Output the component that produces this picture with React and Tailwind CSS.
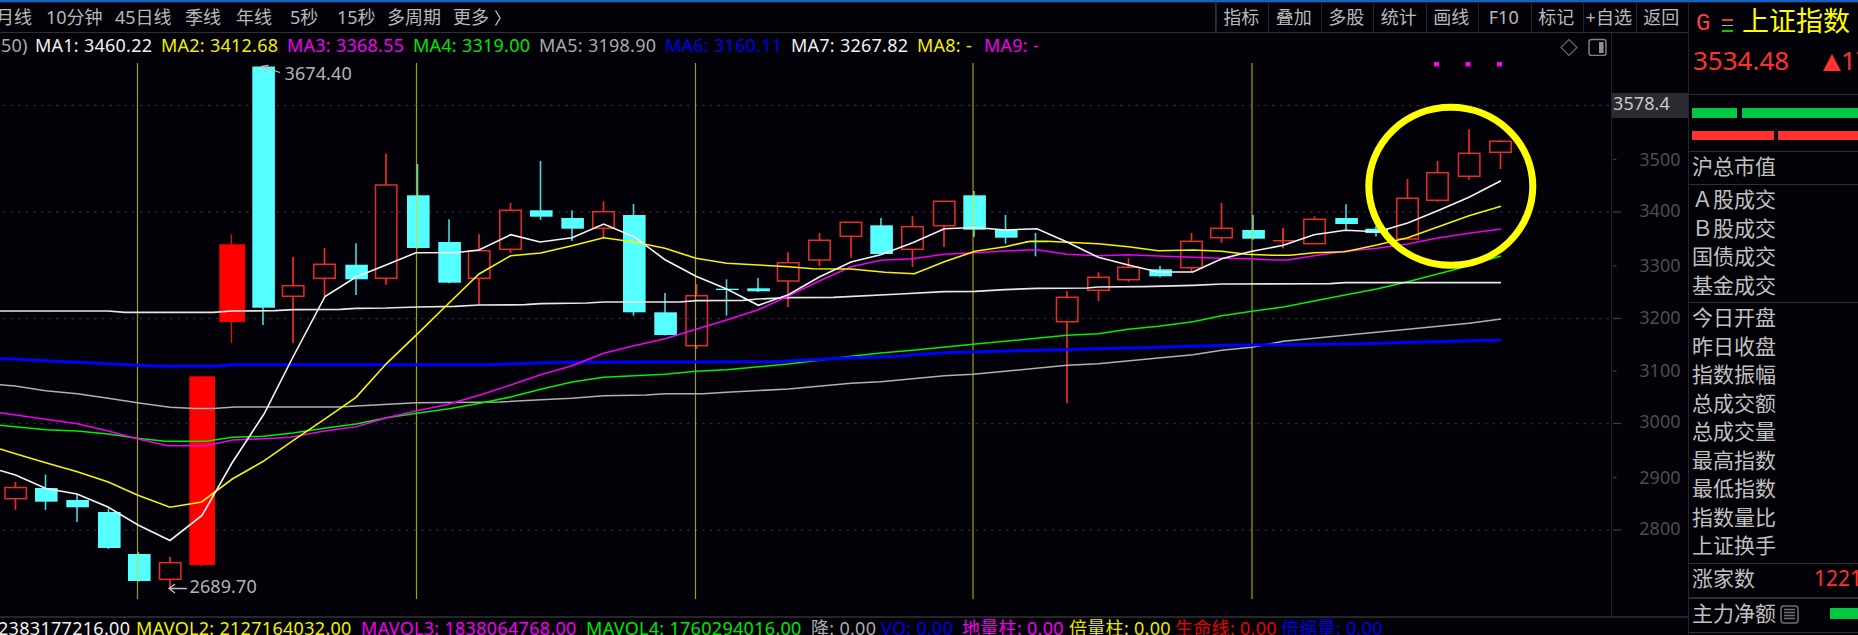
const PERIODS = [
  { label: '月线', width: 'w-[50px]' },
  { label: '10分钟', width: 'w-[69px]' },
  { label: '45日线', width: 'w-[70px]' },
  { label: '季线', width: 'w-[51px]' },
  { label: '年线', width: 'w-[54px]' },
  { label: '5秒', width: 'w-[47px]' },
  { label: '15秒', width: 'w-[50px]' },
  { label: '多周期', width: 'w-[66px]' },
  { label: '更多', width: 'w-[41px]' },
]

const TOOLS = ['指标', '叠加', '多股', '统计', '画线', 'F10', '标记', '+自选', '返回']

const MA_LEGEND = [
  { label: 'MA1: 3460.22', color: 'text-[#f0f0f0]', width: 'w-[126px]' },
  { label: 'MA2: 3412.68', color: 'text-[#f0f000]', width: 'w-[126px]' },
  { label: 'MA3: 3368.55', color: 'text-[#f000f0]', width: 'w-[126px]' },
  { label: 'MA4: 3319.00', color: 'text-[#00e600]', width: 'w-[126px]' },
  { label: 'MA5: 3198.90', color: 'text-[#aaaaaa]', width: 'w-[126px]' },
  { label: 'MA6: 3160.11', color: 'text-[#0000e8]', width: 'w-[126px]' },
  { label: 'MA7: 3267.82', color: 'text-[#f0f0f0]', width: 'w-[126px]' },
  { label: 'MA8: -', color: 'text-[#f0f000]', width: 'w-[67px]' },
  { label: 'MA9: -', color: 'text-[#f000f0]', width: 'w-[67px]' },
]

const VOL_LEGEND = [
  { label: '2383177216.00', color: 'text-[#f0f0f0]', width: 'w-[138px]' },
  { label: 'MAVOL2: 2127164032.00', color: 'text-[#f0f000]', width: 'w-[225px]' },
  { label: 'MAVOL3: 1838064768.00', color: 'text-[#f000f0]', width: 'w-[225px]' },
  { label: 'MAVOL4: 1760294016.00', color: 'text-[#00e600]', width: 'w-[225px]' },
  { label: '降: 0.00', color: 'text-[#aaaaaa]', width: 'w-[70px]' },
  { label: 'VO: 0.00', color: 'text-[#0000e8]', width: 'w-[81px]' },
  { label: '地量柱: 0.00', color: 'text-[#f000f0]', width: 'w-[107px]' },
  { label: '倍量柱: 0.00', color: 'text-[#e8e800]', width: 'w-[106px]' },
  { label: '生命线: 0.00', color: 'text-[#e80000]', width: 'w-[106px]' },
  { label: '倍缩量: 0.00', color: 'text-[#0000e8]', width: 'w-[107px]' },
]

// [type, centre x, body left, body top, body bottom, high, low]
// d = down (cyan), u = up (hollow red), f = limit-up (filled red)
const CANDLES = [
  ['u', 15.5, 5, 487.5, 498.7, 482, 509.7],
  ['d', 45.5, 35, 488, 501.7, 474.5, 510],
  ['d', 77, 66.3, 500, 507.3, 494, 522],
  ['d', 108.5, 98, 512, 548, 508.5, 549],
  ['d', 138.5, 128, 554, 581, 552.3, 581.7],
  ['u', 170, 159.5, 562.7, 579.3, 557, 588.3],
  ['f', 201.5, 189.3, 376.3, 565, 376.3, 566.7],
  ['f', 231.5, 219.3, 244.3, 322, 234.3, 343],
  ['d', 263, 252.3, 66.5, 307.7, 66.5, 325],
  ['u', 293, 282.5, 285.7, 296.3, 257, 343],
  ['u', 324.5, 313.8, 264.3, 278.3, 248, 296.7],
  ['d', 356, 345.3, 264.7, 279.3, 243.3, 295],
  ['u', 386, 375.5, 185, 278.3, 153.5, 284.7],
  ['d', 417.5, 407, 195.3, 248, 164, 248.5],
  ['d', 449, 438.3, 242, 282.7, 219.3, 283.3],
  ['u', 479, 468.5, 250.7, 278.3, 234.3, 305],
  ['u', 510.5, 499.8, 210.3, 249.3, 203, 253],
  ['d', 540.5, 530, 210.3, 216.7, 161, 220],
  ['d', 572, 561.3, 218, 228.7, 210.3, 241],
  ['u', 603.5, 592.8, 211.7, 228.3, 201.3, 238.3],
  ['d', 633.5, 623, 215, 312.3, 204, 315.7],
  ['d', 665, 654.3, 312.3, 335, 293, 335.5],
  ['u', 696.5, 686, 295.7, 345.7, 284, 349],
  ['d', 726.5, 716, 288.7, 290, 279.3, 315.7],
  ['d', 758, 747.3, 288.3, 291.3, 278, 292],
  ['u', 788, 777.5, 262.7, 281, 252.3, 307],
  ['u', 819.5, 808.8, 240.3, 260, 233, 266.3],
  ['u', 851, 840.2, 222.3, 236.3, 222.3, 257.7],
  ['d', 881, 870.3, 225.3, 254, 218, 254],
  ['u', 912.5, 901.8, 226.7, 249.3, 216.3, 266.7],
  ['u', 944, 933.5, 201.3, 225.7, 201.3, 247],
  ['d', 974, 963.3, 195.3, 229.7, 191, 237],
  ['d', 1005.5, 995, 229.7, 237.7, 215, 243.7],
  ['d', 1035.5, 1025.3, 241, 242.3, 233, 256.3],
  ['u', 1067, 1056.5, 297.3, 321.7, 291.3, 403.3],
  ['u', 1098.5, 1087.8, 277.3, 290.3, 272.3, 301],
  ['u', 1128.5, 1117.8, 267.3, 279.7, 258.3, 281.7],
  ['d', 1160, 1149.3, 269.3, 276.3, 266, 277.3],
  ['u', 1191.5, 1180.8, 241.3, 267.7, 233, 271.7],
  ['u', 1221.5, 1210.8, 228.3, 237.7, 203, 242.7],
  ['d', 1253, 1242.3, 230, 238.7, 215, 239.7],
  ['u', 1283, 1272.8, 240.7, 240.7, 228.3, 248.3],
  ['u', 1314.5, 1303.8, 219.3, 243.7, 216.3, 243.7],
  ['d', 1346, 1335.3, 218, 224, 204.3, 230.3],
  ['d', 1376, 1365.3, 228.7, 233, 226, 236.5],
  ['u', 1407.5, 1396.8, 198.3, 239, 179, 239],
  ['u', 1437.5, 1426.8, 172.7, 200.3, 161, 201.7],
  ['u', 1469, 1458.5, 153.3, 176.3, 129.3, 179.7],
  ['u', 1500.5, 1489.8, 141.3, 152.3, 140, 169],
]

const MA_LINES = [
  {
    name: 'MA5', color: '#b0b0b0', width: 1.6,
    points: '0,384.7 15,386 45.7,390.7 77.3,393.7 108.3,398.3 137.3,402.7 170,407.3 195,408.5 213,408.5 235,407 340,407 356,406 416.7,402.7 480,402.3 500,402 540.7,399.7 572,398.3 603.7,395.7 646,395 665,393.7 703,393.7 726.7,392.3 788.3,389 851,383.3 880.7,381.7 944.3,375.7 973,374.3 1067,365.3 1098.3,363.7 1158.3,358 1193,354.7 1221.7,350.3 1252,347.3 1283.3,341.3 1345,335.3 1407.7,329.3 1469,323.3 1501,319',
  },
  {
    name: 'MA4', color: '#00f000', width: 1.6,
    points: '0,425.3 45.7,429.7 77.3,431 108.3,434 137.3,438.3 165,441.3 206,441.3 232.3,437.3 263.3,436.3 293,433 324.3,428.3 356,424 386.7,417.7 416.7,413.3 449,408.7 480,403.3 510.7,397 540.7,389.3 572,382 603.7,377.3 634,375.7 665,374.3 696,371.3 726.7,369.7 788.3,364 819.3,360.3 851,356.3 880.7,353 912.7,350.3 973,344.3 1067,335.3 1098.3,333.7 1128.3,329.3 1158.3,326.3 1193,321.7 1221.7,315.7 1252,311.3 1283.3,307 1345,295 1376.7,289 1407.7,281.7 1453,270 1501,256',
  },
  {
    name: 'MA6', color: '#0000ff', width: 3,
    points: '0,358.7 15,359 45.7,360.7 77.3,362.3 137.3,365.3 165,366.3 213,366.3 235,364.8 493,364.8 510.7,363.7 567,362.3 773,361.7 851,357.7 900,356.3 912.7,354.7 944,352.7 1037,350.3 1158,347.3 1226.7,345.3 1280,344.7 1360,343.8 1423,342 1501,340',
  },
  {
    name: 'MA7', color: '#e8e8e8', width: 1.7,
    points: '0,311 108,311 125,312.3 213,312.3 232,311 275,310.7 293,309.7 340,309.3 356,308.3 386,308 417,307 455,306.3 479,305 525,304.7 540.7,303.7 587,303 603.7,302 680,302 696,300.7 743,300.3 758,299 788,297.7 833,297.3 900,294 944,291.7 975,291.3 1005,289.7 1037,288.3 1087,288 1098,287 1143,286.7 1193,285.3 1222,284 1330,283.7 1345,282.6 1501,282.6',
  },
  {
    name: 'MA3', color: '#f000f0', width: 1.6,
    points: '0,412.7 45.7,419.3 77.3,423.7 108.3,431 137.3,438.7 168,445.7 206,445.7 232.3,440 263.3,438.7 290,437.3 324.3,431 356,426.7 386.7,417.7 416.7,410.7 446.7,404.7 480,395 510.7,385 540.7,374.7 572,365.7 603.7,353.3 634,345.7 665,338.7 696,329.3 726.7,320 758.3,309.7 788.3,296 819.3,281 851,266.7 880.7,260.3 912.7,258.7 944.3,254.3 975,252.7 1005.3,251 1037,249.7 1067,254.3 1098.3,255.7 1128.3,254.7 1158.3,256 1193,257.3 1221.7,258.3 1252,258.7 1273,260 1288,260 1314,255.7 1345,251.3 1376.7,248.3 1407.7,244 1437.7,238 1469,233.3 1501,229',
  },
  {
    name: 'MA2', color: '#f5f500', width: 1.6,
    points: '0,449 15.5,453.7 45.7,462.7 77.3,471.7 108.3,482 137.3,495 170,507.3 201.7,502 232.3,479 263.3,461.3 293.3,440.3 324.3,419.3 356,397.3 386.7,363.3 416.7,334.7 446.7,305.3 479,274 510.7,255.7 540.7,253 572,245.7 603.7,237.7 634,242 665,248.3 696,258.3 726.7,263.3 758.3,265 788.3,266.7 813.3,268.7 851,269 885,272.3 914.3,273.7 944.3,261.7 975,251.3 1005.3,246.7 1030,241.3 1046.7,241.3 1067,242.3 1098.3,243.7 1128.3,246.7 1158.3,250.7 1193.3,250 1221.7,251.3 1246.7,254.3 1273,255.3 1290,255.3 1314,252.7 1345,251.7 1376.7,245 1407.7,237.7 1437.7,227 1469,215.7 1501,206.3',
  },
  {
    name: 'MA1', color: '#f5f5f5', width: 1.6,
    points: '0,470.5 15.5,475 46,488.5 77,494 108,507 138,525 170,540.5 202,515.5 232,463 264,414 293,357 325,296.5 356,277 386,265 416,252.7 457,252.5 479,250 510.7,234.7 540,242 572,237.7 603.7,224 634,236.7 665,259.7 696,276.3 726.7,289 758.3,305.3 788.3,294.7 819.3,277 851,262 880.7,254.7 912.7,242.7 944.3,228.7 975,227.5 1005.3,230 1037,228.7 1067,242 1098.3,257.3 1128.3,265 1158.3,272 1193,272 1221.7,258.7 1252,251.3 1283.3,245.3 1314,234.7 1345.3,230.3 1378,231.7 1407.7,223 1437.7,210.7 1469,197.3 1501,180.7',
  },
]

const GRID_Y = [105.5, 212, 318.5, 423.5, 530]
const YEAR_LINES = [137.5, 416.5, 695.5, 973, 1252]

const AXIS = [
  { label: '3500', text: 165.5, tick: 159.5, long: false },
  { label: '3400', text: 216.5, tick: 212, long: true },
  { label: '3300', text: 272, tick: 266, long: false },
  { label: '3200', text: 323.5, tick: 318.5, long: true },
  { label: '3100', text: 377, tick: 371, long: false },
  { label: '3000', text: 428, tick: 423.5, long: true },
  { label: '2900', text: 483.5, tick: 477.5, long: false },
  { label: '2800', text: 534.5, tick: 530, long: true },
]

const TURNOVER = ['Ａ股成交', 'Ｂ股成交', '国债成交', '基金成交']
const QUOTES = ['今日开盘', '昨日收盘', '指数振幅', '总成交额', '总成交量', '最高指数', '最低指数', '指数量比', '上证换手']

function Candle({ data }) {
  const [type, cx, left, top, bottom, high, low] = data
  if (type === 'd') {
    return (
      <g fill="#55ffff">
        <rect x={cx - 0.8} y={high} width="1.6" height={low - high} opacity="0.85" />
        <rect x={left} y={top} width="22.6" height={bottom - top} />
      </g>
    )
  }
  if (type === 'f') {
    return (
      <g fill="#ff0000">
        <rect x={cx - 0.6} y={high} width="1.2" height={low - high} />
        <rect x={left} y={top} width="25.7" height={bottom - top} />
      </g>
    )
  }
  return (
    <g stroke="#e82c2c" strokeWidth="1.5" fill="none">
      <path d={`M${cx} ${high}V${top}M${cx} ${bottom}V${low}`} strokeWidth="1.7" />
      {top === bottom ? (
        <path d={`M${left} ${top}h21.6M${cx} ${high}V${low}`} />
      ) : (
        <rect x={left} y={top} width="21.4" height={bottom - top} />
      )}
    </g>
  )
}

function Chart() {
  return (
    <svg width="1611" height="554" viewBox="0 62 1611 554" className="block" fontFamily="'Noto Sans', sans-serif" fontSize="18">
      {GRID_Y.map((y) => (
        <path key={y} d={`M3 ${y}H1611`} stroke="#2b2b2e" strokeWidth="1.4" strokeDasharray="2.4 5.2" />
      ))}

      {CANDLES.map((c) => (
        <Candle key={c[1]} data={c} />
      ))}

      {YEAR_LINES.map((x) => (
        <path key={x} d={`M${x} 63V599`} stroke="#e6d900" strokeOpacity="0.72" strokeWidth="1.2" />
      ))}

      {MA_LINES.map(({ name, color, width, points }) => (
        <polyline key={name} points={points} fill="none" stroke={color} strokeWidth={width} />
      ))}

      {/* high / low markers */}
      <path d="M280 72.5L261.5 66.5M268.5 65.3L261.5 66.5L266.5 72.5" fill="none" stroke="#c0c0c0" strokeWidth="1.3" />
      <text x="284.5" y="80" fill="#b4b4b4" letterSpacing="0.1">3674.40</text>
      <path d="M187 588.5H169M175 584L169 588.5L175 593" fill="none" stroke="#c0c0c0" strokeWidth="1.3" />
      <text x="189.5" y="593" fill="#b4b4b4" letterSpacing="0.1">2689.70</text>

      <rect x="1434" y="62" width="5" height="4.5" fill="#ff00ff" />
      <rect x="1465.5" y="62" width="5" height="4.5" fill="#ff00ff" />
      <rect x="1497" y="62" width="5" height="4.5" fill="#ff00ff" />

      <ellipse cx="1450.8" cy="186.3" rx="82" ry="79" fill="none" stroke="#ffff00" strokeWidth="7" />
    </svg>
  )
}

function PriceAxis() {
  return (
    <svg width="76" height="583" viewBox="1612 33 76 583" className="block" fontFamily="'Noto Sans', sans-serif" fontSize="18">
      <rect x="1612" y="93" width="76" height="25" fill="#2a2b30" />
      <text x="1613" y="110" fill="#c8c8c8" letterSpacing="0.1">3578.4</text>
      {AXIS.map(({ label, text, tick, long }) => (
        <g key={label}>
          <path d={`M1613 ${tick}h${long ? 8 : 3.5}`} stroke="#3c3c3e" strokeWidth="1.3" />
          <text x="1680.5" y={text} textAnchor="end" fill="#4e4e4e">{label}</text>
        </g>
      ))}
    </svg>
  )
}

function Toolbar() {
  return (
    <div className="flex justify-between h-[30px] shrink-0 border-b border-[#303030] text-[#b8b8b8]">
      <div className="flex items-center -ml-1 pb-px whitespace-nowrap">
        {PERIODS.map(({ label, width }) => (
          <span key={label} className={`${width} shrink-0`}>{label}</span>
        ))}
        <svg width="8" height="18" viewBox="0 0 8 18" className="mt-0.5" fill="none" stroke="#b8b8b8" strokeWidth="1.4">
          <path d="M1.5 1.5L6 9L1.5 16.5" />
        </svg>
      </div>
      <div className="flex border-l border-[#303030]">
        {TOOLS.map((label) => (
          <span key={label} className="flex w-[52.5px] items-center justify-center border-l border-[#262628] pr-0.5 pb-px whitespace-nowrap">
            {label}
          </span>
        ))}
      </div>
    </div>
  )
}

function SidePanel() {
  return (
    <aside className="flex w-[170px] shrink-0 flex-col overflow-hidden border-l border-[#262628] text-[21px] leading-[28.5px] text-[#c0c0c0] whitespace-nowrap">
      <div className="h-[92px] shrink-0 border-b border-[#303030] pl-1">
        <div className="flex h-[37px] items-center">
          <span className="w-[24px] shrink-0 pl-[3px] pt-1.5 font-['Liberation_Mono'] text-[24px] text-[#ff4040]">G</span>
          <div className="flex w-[25px] shrink-0 flex-col gap-1 pl-[5px] pt-2">
            <span className="h-[1.5px] w-[11px] bg-[#e04040]" />
            <span className="h-[1.5px] w-[11px] bg-[#b0b0b0]" />
            <span className="h-[1.5px] w-[11px] bg-[#00d000]" />
          </div>
          <span className="text-[27px] text-[#ffff00]">上证指数</span>
        </div>
        <div className="flex h-[41px] items-center text-[26px] text-[#ff3030]">
          <span className="w-[130px] shrink-0">3534.48</span>
          <svg width="18" height="17" viewBox="0 0 18 17" className="mt-1 shrink-0">
            <path d="M9 0L18 17H0Z" fill="#ff3030" />
          </svg>
          <span>17</span>
        </div>
      </div>

      <div className="flex h-[57px] shrink-0 flex-col gap-[13px] border-b border-[#303030] pl-[3px] pt-[13px]">
        <div className="flex h-[10px] gap-[5px]">
          <span className="w-[45px] bg-[#00c840]" />
          <span className="flex-1 bg-[#00c840]" />
        </div>
        <div className="flex h-[9px] gap-1">
          <span className="w-[82px] bg-[#ff3030]" />
          <span className="flex-1 bg-[#ff3030]" />
        </div>
      </div>

      <div className="h-[33px] shrink-0 border-b border-[#303030] pl-[3px]">沪总市值</div>

      <div className="h-[118px] shrink-0 border-b border-[#303030] pl-[3px]">
        {TURNOVER.map((label) => (
          <div key={label}>{label}</div>
        ))}
      </div>

      <div className="h-[261px] shrink-0 border-b border-[#303030] pl-[3px]">
        {QUOTES.map((label) => (
          <div key={label}>{label}</div>
        ))}
      </div>

      <div className="flex h-[35px] shrink-0 border-b-2 border-[#303030] pl-[3px]">
        <span className="w-[122px] shrink-0">涨家数</span>
        <span className="text-[#ff3030]">1221</span>
      </div>

      <div className="flex h-[34px] shrink-0 border-b border-[#303030] pl-[3px]">
        <span className="w-[88px] shrink-0">主力净额</span>
        <svg width="19" height="19" viewBox="0 0 19 19" className="mt-[6px] shrink-0" fill="none" stroke="#707070">
          <rect x="1" y="1" width="17" height="17" rx="3" strokeWidth="1.5" />
          <path d="M4 4.5H15M4 7.5H15M4 10.5H15M4 13.5H15" strokeWidth="1.3" />
        </svg>
        <span className="ml-[31px] mt-[9px] h-[11px] flex-1 bg-[#00c840]" />
      </div>
    </aside>
  )
}

export default function App() {
  return (
    <div className="flex h-[635px] w-[1858px] flex-col overflow-hidden bg-[#020208] font-['Noto_Sans','Noto_Sans_CJK_SC',sans-serif] text-[18px]">
      <div className="h-[3px] shrink-0 border-b border-[#1a2028] bg-[#1262cc]" />
      <div className="flex min-h-0 flex-1">
        <main className="flex w-[1688px] shrink-0 flex-col">
          <Toolbar />
          <div className="flex h-[583px] shrink-0">
            <section className="w-[1612px] border-r border-[#242426]">
              <div className="flex h-[29px] justify-between overflow-hidden leading-[24px] whitespace-nowrap">
                <div className="flex tracking-[0.25px]">
                  <span className="w-[35px] pl-px text-[#aaaaaa]">50)</span>
                  {MA_LEGEND.map(({ label, color, width }) => (
                    <span key={label} className={`${width} ${color} shrink-0`}>{label}</span>
                  ))}
                </div>
                <div className="flex gap-2.5 pr-1 pt-[5px]">
                  <svg width="18" height="18" viewBox="0 0 18 18" fill="none" stroke="#606060" strokeWidth="1.3">
                    <path d="M9 1.5L17 9.5L9 17.5L1 9.5Z" />
                  </svg>
                  <svg width="19" height="18" viewBox="0 0 19 18">
                    <rect x="1" y="1.5" width="17" height="16" rx="2.5" fill="none" stroke="#808080" strokeWidth="1.5" />
                    <rect x="11" y="4" width="4.5" height="11" fill="#909090" />
                  </svg>
                </div>
              </div>
              <Chart />
            </section>
            <PriceAxis />
          </div>
          <div className="flex h-[19px] shrink-0 overflow-hidden border-t-2 border-[#262628] leading-[20px] whitespace-nowrap">
            <div className="-ml-[2px] flex">
              {VOL_LEGEND.map(({ label, color, width }) => (
                <span key={label} className={`${width} ${color} shrink-0 tracking-[0.3px]`}>{label}</span>
              ))}
            </div>
          </div>
        </main>
        <SidePanel />
      </div>
    </div>
  )
}
